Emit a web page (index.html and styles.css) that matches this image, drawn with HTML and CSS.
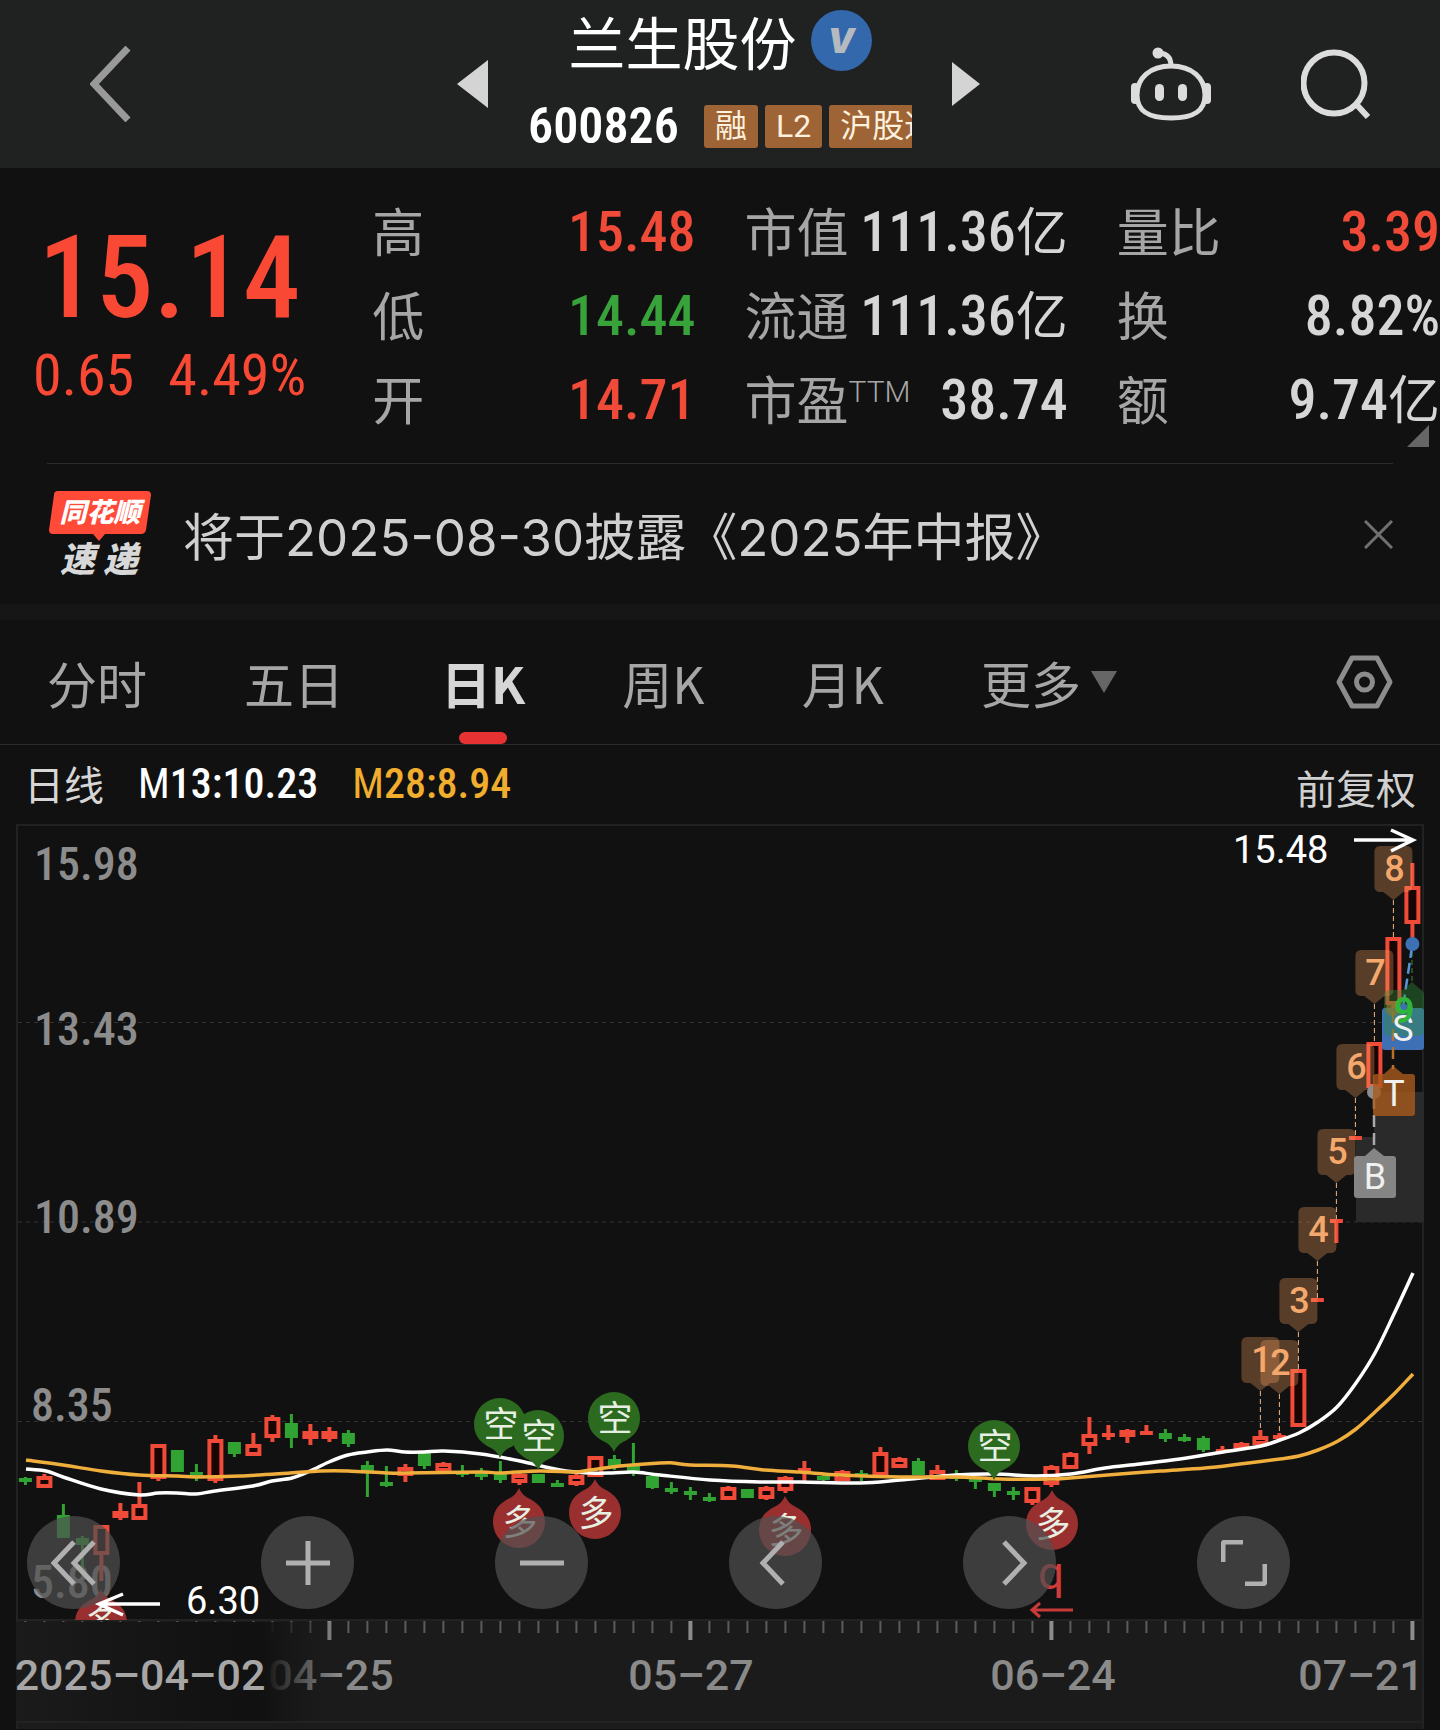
FILE: index.html
```html
<!DOCTYPE html>
<html lang="zh-CN">
<head>
<meta charset="utf-8">
<meta name="viewport" content="width=device-width, initial-scale=1">
<title>兰生股份 600826</title>
<link rel="stylesheet" href="styles.css">
</head>
<body>
<header class="topbar">
  <div class="topbar-side">
    <button class="icon-btn" aria-label="返回">
      <svg width="42" height="76" viewBox="0 0 42 76"><path d="M38 2 4 38l34 36" fill="none" stroke="#999" stroke-width="7"/></svg>
    </button>
  </div>
  <div class="switcher">
    <button class="icon-btn" aria-label="上一只"><svg width="31" height="48" viewBox="0 0 31 48"><path d="M31 0v48L0 24z" fill="#d4d4d4"/></svg></button>
    <div class="stock">
      <h1 class="stock-name">兰生股份 <span class="badge">V</span></h1>
      <div class="stock-sub">
        <span class="code">600826</span>
        <span class="tags"><span class="tag">融</span><span class="tag">L2</span><span class="tag">沪股通</span></span>
      </div>
    </div>
    <button class="icon-btn" aria-label="下一只"><svg width="28" height="44" viewBox="0 0 28 44"><path d="M0 0v44l28-22z" fill="#d4d4d4"/></svg></button>
  </div>
  <div class="topbar-side topbar-right">
    <button class="icon-btn" aria-label="智能助手">
      <svg width="82" height="78" viewBox="1130 43 82 78" fill="none" stroke="#dcdcdc" stroke-width="5">
        <path d="M1171 64c21 0 34 12 34 29 0 16-11 23-34 23s-34-7-34-23c0-17 13-29 34-29z"/>
        <path d="M1158 51c8 0 13 4 13 13"/>
        <g fill="#dcdcdc" stroke="none"><circle cx="1158" cy="51" r="5.500"/><rect x="1155" y="82" width="9" height="17" rx="4.500"/><rect x="1178" y="82" width="9" height="17" rx="4.500"/><rect x="1131" y="81" width="8" height="21" rx="4"/><rect x="1203" y="81" width="8" height="21" rx="4"/></g>
      </svg>
    </button>
    <button class="icon-btn" aria-label="搜索">
      <svg width="70" height="72" viewBox="0 0 70 72" fill="none" stroke="#dcdcdc" stroke-width="6"><circle cx="33" cy="35" r="30.500"/><path d="m55 56 12 13"/></svg>
    </button>
  </div>
</header>

<section class="quote">
  <div class="price-box">
    <div class="price">15.14</div>
    <div class="change"><span>0.65</span><span>4.49%</span></div>
  </div>
  <dl class="stats">
    <div><dt>高</dt><dd class="up">15.48</dd></div>
    <div><dt>低</dt><dd class="down">14.44</dd></div>
    <div><dt>开</dt><dd class="up">14.71</dd></div>
  </dl>
  <dl class="stats">
    <div><dt>市值</dt><dd>111.36<span class="unit">亿</span></dd></div>
    <div><dt>流通</dt><dd>111.36<span class="unit">亿</span></dd></div>
    <div><dt>市盈<sup>TTM</sup></dt><dd>38.74</dd></div>
  </dl>
  <dl class="stats">
    <div><dt>量比</dt><dd class="up">3.39</dd></div>
    <div><dt>换</dt><dd>8.82%</dd></div>
    <div><dt>额</dt><dd>9.74<span class="unit">亿</span></dd></div>
  </dl>
  <svg class="corner" width="22" height="22" viewBox="0 0 22 22"><path d="M22 0v22H0z" fill="#666"/></svg>
</section>

<section class="news">
  <svg class="news-logo" width="102" height="86" viewBox="0 0 102 86">
    <path d="M9 0h89q4 0 4 4l-5 35q-1 4-5 4H56l-6 7-6-7H4q-4 0-4-4L5 4q0-4 4-4z" fill="#ff4a38"/>
    <text x="51" y="31" class="logo-a">同花顺</text>
    <text x="50" y="81" class="logo-b">速 递</text>
  </svg>
  <a class="news-link" href="#">将于2025-08-30披露《2025年中报》</a>
  <button class="icon-btn" aria-label="关闭"><svg width="29" height="29" viewBox="0 0 29 29"><path d="m1 1 27 27M28 1 1 28" stroke="#707070" stroke-width="3"/></svg></button>
</section>

<nav class="tabs">
  <button class="tab">分时</button>
  <button class="tab">五日</button>
  <button class="tab active">日K</button>
  <button class="tab">周K</button>
  <button class="tab">月K</button>
  <button class="tab">更多<svg width="26" height="22" viewBox="0 0 26 22"><path d="M0 0h26L13 22z" fill="#666"/></svg></button>
  <button class="icon-btn settings" aria-label="设置">
    <svg width="57" height="54" viewBox="0 0 57 54" fill="none" stroke="#8c8c8c" stroke-width="5" stroke-linejoin="round"><path d="M16 3h25l13 24-13 24H16L3 27z"/><circle cx="28.500" cy="27" r="8"/></svg>
  </button>
</nav>

<div class="legend">
  <span>日线</span><span class="ma13">M<b>13:10.23</b></span><span class="ma28">M<b>28:8.94</b></span>
  <button class="adjust">前复权</button>
</div>

<main class="chart">
  <svg id="chart" viewBox="0 825 1440 905" role="img" aria-label="日K线图">
    <defs>
      <clipPath id="plot"><rect x="16" y="825" width="1408" height="796"/></clipPath>
      <linearGradient id="fade" gradientUnits="userSpaceOnUse" x1="16" y1="0" x2="340" y2="0">
        <stop offset="0" stop-color="#1b1b1b"/><stop offset=".6" stop-color="#121212"/><stop offset=".76" stop-color="#111"/><stop offset="1" stop-color="#1b1b1b" stop-opacity="0"/>
      </linearGradient>
    </defs>
    <rect x="16" y="1622" width="1408" height="108" fill="#1b1b1b"/>
    <g fill="none" stroke="#222" stroke-width="2">
      <path d="M17 1730V826h1406v904M16 1621h1408M16 1723h1408"/>
    </g>
    <path d="M18 1023.500h1404M18 1223h1404M18 1422.500h1404" stroke="#333" stroke-dasharray="4 4"/>
    <path d="M1356 1138h18v-45h50v130h-68z" fill="#2a2a2a"/>
    <g class="price-axis">
      <text x="34" y="881">15.98</text><text x="34" y="1046">13.43</text><text x="34" y="1234">10.89</text><text x="31" y="1422">8.35</text><text x="31" y="1599">5.80</text>
    </g>
    <g clip-path="url(#plot)">
      <g id="candles"></g>
      <g id="averages" fill="none" stroke-width="3.500" stroke-linejoin="round"></g>
      <g id="signals"></g>
      <g id="counts"></g>
      <g class="marks">
        <path d="M1374 1098v52" stroke="#aaa" stroke-width="2.500" stroke-dasharray="12 6"/>
        <circle cx="1374" cy="1093" r="7" fill="#8c8c8c"/>
        <path d="M1373 1078q0-3 3-3h8l9-8 10 8h9q3 0 3 3v36q0 3-3 3h-36q-3 0-3-3z" fill="#a85a1c" fill-opacity=".8"/>
        <text x="1394" y="1107">T</text>
        <path d="M1354 1160q0-3 3-3h8l9-8 10 8h9q3 0 3 3v36q0 3-3 3h-36q-3 0-3-3z" fill="#858585"/>
        <text x="1375" y="1190">B</text>
        <rect x="1382" y="1009" width="42" height="42" rx="3" fill="#3d70b4"/>
        <circle cx="1393" cy="1010" r="7" fill="#c06a20" fill-opacity=".7"/>
        <path d="M1393 1012v58" stroke="#b8702c" stroke-width="2.500" stroke-dasharray="12 6"/>
        <path d="M1412 945v38" stroke="#3f8a3f" stroke-dasharray="5 3"/>
        <path d="m1412 948-9 60" stroke="#5a94d8" stroke-width="2.500" stroke-dasharray="11 5"/>
        <circle cx="1412.400" cy="945" r="7" fill="#3d70b4"/>
        <path d="M1384 997q0-6 6-6h13l9-8 9 8q3 1 3 6v34q0 6-6 6h-28q-6 0-6-6z" fill="#2f8f3a" fill-opacity=".4"/>
        <text x="1403" y="1042">S</text>
        <circle cx="1404" cy="1010" r="5" fill="#3d70b4"/>
        <text x="1404" y="1024" class="nine">9</text>
      </g>
    </g>
    <g fill="none" stroke="#fff" stroke-width="3.500"><path d="M1354 841h58M1391 831l22 10-22 11"/><path d="M160 1605h-60M123 1595l-24 10 24 11"/></g>
    <text x="1233" y="864" class="extreme">15.48</text>
    <text x="186" y="1615" class="extreme">6.30</text>
    <text x="1051" y="1590" class="q-mark">q</text>
    <path d="M1073 1611h-41M1040 1604l-8 7 8 7" fill="none" stroke="#c83a38" stroke-width="3"/>
    <g id="ticks"></g>
    <g class="dates">
      <text x="331" y="1691">04–25</text><text x="691" y="1691">05–27</text><text x="1053" y="1691">06–24</text><text x="1361" y="1691">07–21</text>
      <rect x="16" y="1623" width="324" height="99" fill="url(#fade)"/>
      <text x="140" y="1691" class="first">2025–04–02</text>
    </g>
  </svg>
  <div class="tools">
    <button aria-label="最早"><svg viewBox="0 0 46 46"><path d="M23 2 3 23l20 21M43 2 23 23l20 21"/></svg></button>
    <button aria-label="放大"><svg viewBox="0 0 46 46"><path d="M1 23h44M23 1v44"/></svg></button>
    <button aria-label="缩小"><svg viewBox="0 0 46 46"><path d="M1 23h44"/></svg></button>
    <button aria-label="左移"><svg viewBox="0 0 46 46"><path d="M30 2 10 23l20 21"/></svg></button>
    <button aria-label="右移"><svg viewBox="0 0 46 46"><path d="m17 2 20 21-20 21"/></svg></button>
    <button aria-label="全屏"><svg viewBox="0 0 46 46"><path d="M2 22V5q0-3 3-3h17M44 24v17q0 3-3 3H24"/></svg></button>
  </div>
</main>
<script src="chart.js"></script>
</body>
</html>
```
FILE: chart.js
```js
const STEP = 19;
const FIRST = 25.4;
const BASE = 1380;
const xOf = (i) => FIRST + i * STEP;

// Each day: direction, then high, body top, body bottom and low, measured from BASE.
const days = `g 98 99 102 106;r 95 97 109 109;g 125 136 159 159;g 157 159 166 188;r 146 146 176 202;r 124 132 139 141;r 103 125 141 141;r 65 65 100 102;g 71 71 93 93;g 85 93 97 102
r 56 60 102 104;g 63 63 75 78;r 54 65 77 77;r 36 38 59 63;g 35 44 59 69;r 45 52 60 66;r 48 52 60 63;g 51 54 65 68;g 82 86 94 118;g 87 103 105 108
r 85 88 97 103;g 74 74 87 90;r 83 84 93 93;g 86 92 94 98;g 89 94 96 101;g 82 95 101 104;r 93 95 104 106;g 95 95 104 104;g 101 104 106 108;r 94 96 106 107
r 77 77 98 98;g 76 80 88 91;g 64 86 93 97;g 96 97 109 110;g 103 109 110 115;g 108 112 116 121;g 114 118 120 123;r 107 108 121 121;g 110 110 119 119;r 107 108 120 121
r 97 98 112 114;r 82 89 92 102;g 95 97 100 105;r 91 92 102 102;g 91 94 98 102;r 68 73 97 97;r 78 79 89 89;g 79 82 96 96;r 86 91 101 101;g 91 96 98 102
g 98 99 101 110;g 104 104 112 118;g 108 112 115 121;r 108 108 124 126;r 86 87 106 108;r 73 74 90 90;r 38 55 67 75;r 46 54 58 61;r 50 51 58 64;r 46 52 56 56
g 50 54 60 63;g 55 58 60 63;g 57 59 71 73;r 67 70 73 73;r 63 64 70 70;r 51 57 66 66;r 54 56 60 60;r -10 -10 48 48;r -81 -81 -78 -78;r -160 -160 -157 -136
r -243 -243 -239 -239;r -337 -337 -291 -288;r -442 -442 -374 -370;r -516 -493 -455 -437`
  .split(/[;\n]/)
  .map((d) => d.split(" "))
  .map(([dir, ...v]) => [dir, ...v.map((n) => BASE + Number(n))]);

document.getElementById("candles").innerHTML = days.map(([dir, high, top, bottom, low], i) => {
  const x = xOf(i);
  const up = dir === "r";
  const color = up ? "#f04a38" : "#31a332";
  const tall = bottom - top;
  const wick = (a, b) => b > a ? `<path d="M${x} ${a}V${b}" stroke="${color}" stroke-width="${up ? 4 : 3}"/>` : "";
  let body;
  if (up && tall >= 9) {
    body = `<rect x="${x - 6}" y="${top + 2}" width="12" height="${tall - 4}" fill="#180504" stroke="${color}" stroke-width="4"/>`;
  } else {
    const w = up && tall > 4 ? 16 : 13;
    body = `<rect x="${x - w / 2}" y="${top}" width="${w}" height="${Math.max(tall, 4)}" fill="${color}"/>`;
  }
  return wick(high, top) + body + wick(bottom, low);
}).join("");

// Smooth line through the given points.
const curve = (pts) => {
  let d = `M${pts[0]}`;
  for (let i = 0; i < pts.length - 1; i++) {
    const [a, b, c, e] = [pts[i - 1] || pts[i], pts[i], pts[i + 1], pts[i + 2] || pts[i + 1]];
    d += `C${b[0] + (c[0] - a[0]) / 6} ${b[1] + (c[1] - a[1]) / 6} ${c[0] - (e[0] - b[0]) / 6} ${c[1] - (e[1] - b[1]) / 6} ${c[0]} ${c[1]}`;
  }
  return d;
};
const points = (s) => s.split(" ").map((p) => p.split(",").map(Number)).map(([x, y]) => [x, y + BASE]);
const ma13 = points("26,90 46,92 63,98 101,110 139,116 158,114 177,114 196,115 215,112 253,107 272,102 292,99 310,92 329,83 348,76 367,73 387,71 405,73 424,73 444,72 481,75 520,82 560,91 590,94 612,94 634,93 660,96 710,101 760,103 800,103 860,104 900,101 955,96 995,95 1035,97 1071,95 1105,89 1140,85 1180,80 1223,73 1261,67 1280,61 1299,54 1318,43 1337,28 1356,4 1375,-26 1394,-65 1413,-106");
const ma28 = points("26,81 63,86 101,92 139,96 177,97 196,98 240,97 290,94 320,92 348,92 386,94 405,94 480,93 500,94 540,92 575,93 590,91 620,87 660,84 673,84 690,86 732,87 765,91 800,93 840,96 900,98 960,98 1000,100 1050,100 1070,99 1120,95 1160,92 1205,89 1240,85 1280,80 1299,77 1318,71 1338,62 1356,50 1375,33 1394,15 1413,-5");
document.getElementById("averages").innerHTML =
  `<path d="${curve(ma13)}" stroke="#fff"/><path d="${curve(ma28)}" stroke="#f0ae3c"/>`;

// Bubbles: centre x, centre y.
const shorts = [[500, 1425], [538, 1437], [614, 1419], [994, 1447]];
const longs = [[101, 1624], [519, 1523], [595, 1514], [785, 1531], [1052, 1525]];
const bubble = (x, y, text, dir) =>
  `<g class="bubble ${dir > 0 ? "short" : "long"}"><path d="M${x - 26} ${y}a26 26 0 0 ${dir > 0 ? 1 : 0} 52 0c0 ${dir * 14}-9 ${dir * 20}-17 ${dir * 24}q-6 ${dir * 3}-9 ${dir * 10}q-3 ${-dir * 7}-9 ${-dir * 10}c-8 ${-dir * 4}-17 ${-dir * 10}-17 ${-dir * 24}z"/><text x="${x + 1}" y="${y + 13}">${text}</text></g>`;
document.getElementById("signals").innerHTML =
  shorts.map(([x, y]) => bubble(x, y, "空", 1)).join("") +
  longs.map(([x, y]) => bubble(x, y, "多", -1)).join("");

// Day counters: number, candle index, top edge, end of the dashed lead.
const counts = [[1, 65, 1338, 1431], [2, 66, 1341, 1434], [3, 67, 1279, 1370], [4, 68, 1208, 1299], [5, 69, 1130, 1220], [6, 70, 1045, 1137], [7, 71, 951, 1043], [8, 72, 847, 938]];
document.getElementById("counts").innerHTML = counts.map(([n, i, y, end]) => {
  const x = xOf(i);
  return `<path d="M${x - 19} ${y + 6}q0-6 6-6h26q6 0 6 6v34q0 6-6 6h-3l-10 8-10-8h-3q-6 0-6-6z" fill="#ffa564" fill-opacity=".3"/>` +
    `<path d="M${x} ${y + 54}V${end}" stroke="#f0b483" stroke-dasharray="5 3"/><text x="${x + 1}" y="${y + 35}">${n}</text>`;
}).join("");

document.getElementById("ticks").innerHTML = days.map((_, i) => {
  const major = i % 19 === 16;
  return `<path d="M${xOf(i)} 1622v${major ? 19 : 12}" stroke="${major ? "#8c8c8c" : "#5c5c5c"}" stroke-width="${major ? 4 : 2}"/>`;
}).join("");
```
FILE: styles.css
```css
* { box-sizing: border-box; }

body {
  margin: 0;
  background: #111;
  color: #d6d6d6;
  font-family: "Noto Sans CJK SC", sans-serif;
}

button {
  margin: 0;
  padding: 0;
  border: 0;
  background: none;
  color: inherit;
  font: inherit;
  cursor: pointer;
}

svg { display: block; }

.icon-btn { flex: none; }

/* Top bar */
.topbar {
  display: grid;
  grid-template-columns: 1fr auto 1fr;
  align-items: center;
  height: 168px;
  background: #202221;
}

.topbar-side {
  display: flex;
  align-items: center;
  padding-left: 90px;
}

.topbar-right {
  justify-content: flex-end;
  gap: 89px;
  padding: 0 69px 0 0;
}

.switcher {
  display: flex;
  align-items: center;
  gap: 40px;
  margin-right: 3px;
}

.stock {
  width: 384px;
  padding-bottom: 16px;
}

.stock-name {
  display: flex;
  align-items: center;
  justify-content: center;
  gap: 14px;
  margin: 0;
  color: #fff;
  font-size: 57px;
  font-weight: 400;
  line-height: 80px;
}

.badge {
  width: 61px;
  height: 61px;
  border-radius: 50%;
  background: #3368ad;
  color: #b4bac0;
  font: italic 900 34px/61px Inter, sans-serif;
  text-align: center;
}

.stock-sub {
  display: flex;
  align-items: center;
  gap: 25px;
  height: 52px;
  margin-top: 20px;
}

.code {
  color: #fff;
  font: 600 50px/52px "Roboto Condensed", sans-serif;
}

.tags {
  display: flex;
  flex: 1;
  gap: 7px;
  min-width: 0;
  overflow: hidden;
}

.tag {
  flex: none;
  height: 43px;
  padding: 0 11px;
  border-radius: 3px;
  background: #9f6435;
  color: #fdf0dc;
  font-family: Roboto, "Noto Sans CJK SC", sans-serif;
  font-size: 32px;
  line-height: 42px;
}

/* Quote */
.quote {
  position: relative;
  display: grid;
  grid-template-columns: repeat(4, 1fr);
  gap: 49px;
  padding: 22px 0;
}

.quote::after {
  content: "";
  position: absolute;
  right: 47px;
  bottom: 0;
  left: 47px;
  border-bottom: 1px solid #2c2c2c;
}

.price-box {
  padding: 33px 0 0 16px;
  color: #f94935;
  font-family: "Roboto Condensed", sans-serif;
  text-align: center;
}

.price {
  font-size: 115px;
  font-weight: 500;
  line-height: 110px;
}

.change {
  display: flex;
  justify-content: center;
  gap: 34px;
  font-size: 58px;
  line-height: 84px;
}

.stats { margin: 0; }

.stats div {
  display: flex;
  align-items: center;
  justify-content: space-between;
  height: 84px;
  white-space: nowrap;
}

.stats dt {
  color: #a6a6a6;
  font-size: 52px;
  line-height: 80px;
  padding-bottom: 4px;
}

.stats sup {
  font: 300 30px/30px Roboto, sans-serif;
  vertical-align: 18px;
}

.stats dd {
  margin: 0;
  font: 500 56px/84px "Roboto Condensed", sans-serif;
}

.stats .unit {
  font: 400 52px/52px "Noto Sans CJK SC", sans-serif;
}

.stats .up { color: #f04a38; }
.stats .down { color: #38a33a; }

.corner {
  position: absolute;
  right: 11px;
  bottom: 17px;
}

/* News */
.news {
  display: flex;
  align-items: center;
  height: 140px;
  padding: 0 47px 0 49px;
}

.news-logo { flex: none; }
.news-logo text {
  font-style: italic;
  font-weight: 900;
  text-anchor: middle;
}
.logo-a { fill: #fff; font-size: 27px; }
.logo-b { fill: #d8d8d8; font-size: 35px; }

.news-link {
  flex: 1;
  margin-left: 32px;
  padding-top: 8px;
  color: #d0d0d0;
  font-family: Inter, "Noto Sans CJK SC", sans-serif;
  font-size: 51px;
  line-height: 80px;
  text-decoration: none;
  white-space: nowrap;
}

/* Tabs */
.tabs {
  display: flex;
  gap: 97px;
  height: 141px;
  padding: 0 47px;
  border-top: 16px solid #161616;
  border-bottom: 1px solid #2c2c2c;
}

.tab {
  position: relative;
  display: flex;
  align-items: center;
  gap: 10px;
  color: #a6a6a6;
  font-size: 50px;
  line-height: 72px;
  white-space: nowrap;
}

.tab.active {
  color: #d6d6d6;
  font-weight: 700;
}

.tab.active::after {
  content: "";
  position: absolute;
  bottom: 0;
  left: 50%;
  width: 48px;
  height: 12px;
  margin-left: -24px;
  border-radius: 6px;
  background: #e63232;
}

.settings { margin-left: auto; }

/* Legend */
.legend {
  display: flex;
  align-items: center;
  gap: 34px;
  height: 79px;
  padding: 0 24px 4px;
  font-size: 40px;
}

.legend span {
  line-height: 72px;
  white-space: nowrap;
}

.legend .ma13,
.legend .ma28 {
  padding-top: 2px;
  color: #fff;
  font: 400 42px/72px "Roboto Condensed", sans-serif;
}

.legend .ma28 { color: #f0ad2e; }
.legend b { font-weight: 500; }

.adjust {
  margin: 8px 0 0 auto;
  color: #d0d0d0;
}

/* Chart */
.chart { position: relative; }
#chart { width: 100%; }

.price-axis text {
  fill: #8c8c8c;
  font: 500 46px "Roboto Condensed", sans-serif;
}

.extreme {
  fill: #fff;
  font: 400 38px Roboto, sans-serif;
}

.dates text {
  fill: #8a8a8a;
  font: 500 43px Roboto, sans-serif;
  text-anchor: middle;
}

.dates .first { fill: #a6a6a6; }

.q-mark {
  fill: #d03a38;
  font: 400 46px Roboto, sans-serif;
  text-anchor: middle;
}

.bubble text {
  fill: #e6efe2;
  font-size: 35px;
  text-anchor: middle;
}

.bubble.short { fill: #2b6a1f; }
.bubble.long { fill: #9a2f2f; }

#counts text {
  fill: #f5a86c;
  font: 500 36px Roboto, sans-serif;
  text-anchor: middle;
}

.marks text {
  fill: #f0f0f0;
  font: 400 36px Roboto, sans-serif;
  text-anchor: middle;
}

.marks .nine {
  fill: #30b43a;
  font-weight: 700;
}

.tools {
  position: absolute;
  top: 76.5%;
  right: 150px;
  left: 27px;
  display: flex;
  justify-content: space-between;
}

.tools button {
  display: grid;
  place-items: center;
  width: 93px;
  height: 93px;
  border-radius: 50%;
  background: rgba(80, 80, 80, .7);
}

.tools svg {
  width: 46px;
  height: 46px;
  fill: none;
  stroke: #b0b0b0;
  stroke-width: 5;
}
```
